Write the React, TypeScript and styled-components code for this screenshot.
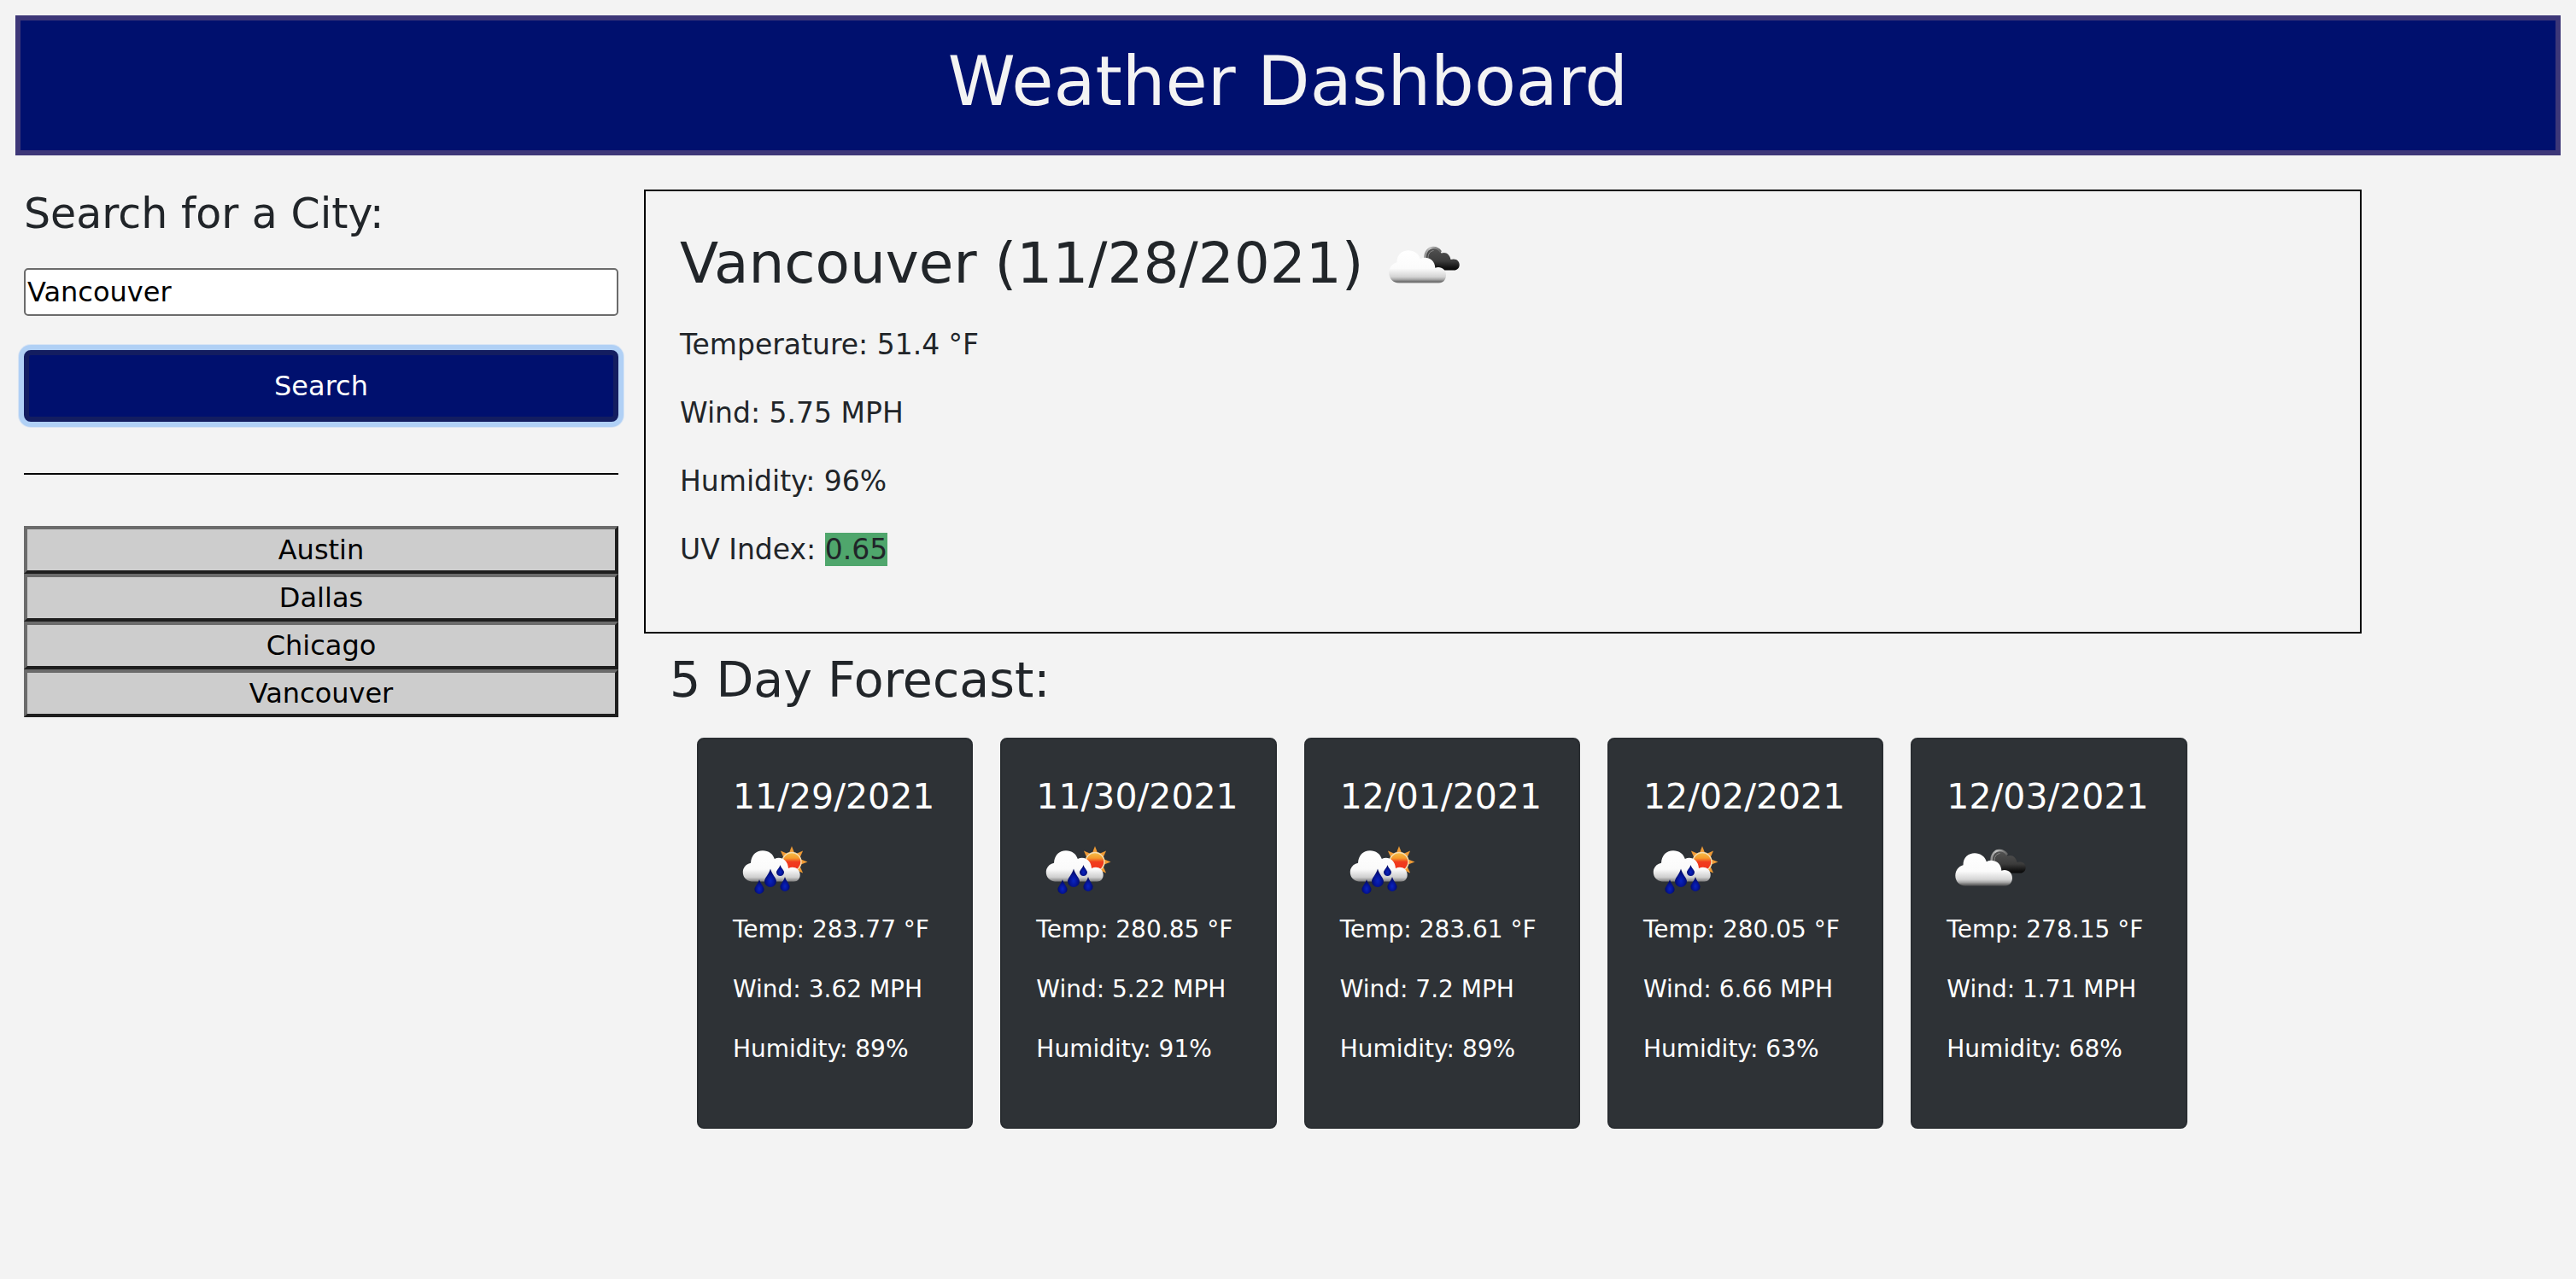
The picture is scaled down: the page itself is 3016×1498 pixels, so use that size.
import React, { useState } from "react";
import styled, { createGlobalStyle } from "styled-components";

const GlobalStyle = createGlobalStyle`
  *, *::before, *::after { box-sizing: border-box; }
  body {
    margin: 0;
    background: #f3f3f3;
    color: #212529;
    font-family: "DejaVu Sans", Verdana, sans-serif;
    font-size: 32px;
    line-height: 48px;
  }
  h1, h2, h3, p, ul { margin: 0; font-weight: 400; }
`;

const Header = styled.header`
  margin: 18px 18px 0;
  padding: 24px 20px 32px;
  border: 6px solid #3d3778;
  background: #00106e;
  color: #f3f3f3;
  text-align: center;
`;

const Title = styled.h1`
  font-size: 80px;
  line-height: 96px;
`;

const Columns = styled.div`
  display: flex;
  align-items: flex-start;
  margin-top: 40px;
`;

const Sidebar = styled.aside`
  flex: 0 0 25%;
  padding: 0 30px 0 28px;
`;

const SearchForm = styled.form`
  display: flex;
  flex-direction: column;
`;

const SearchLabel = styled.label`
  margin-bottom: 34px;
  font-size: 49px;
  line-height: 58px;
`;

const CityInput = styled.input`
  width: 100%;
  height: 56px;
  margin-bottom: 40px;
  padding: 2px;
  border: 2px solid #6b6b6b;
  border-radius: 5px;
  background: #fff;
  color: #000;
  font: inherit;
`;

const SearchButton = styled.button`
  height: 84px;
  border: 6px solid #131d60;
  border-radius: 8px;
  background: #00106e;
  box-shadow: 0 0 0 6px #b0d0f5, 0 0 0 7px #d9e5f4;
  color: #fff;
  font: inherit;
`;

const Divider = styled.hr`
  height: 2px;
  margin: 60px 0;
  border: 0;
  background: #000;
`;

const HistoryList = styled.ul`
  padding: 0;
  list-style: none;
`;

const HistoryButton = styled.button`
  display: block;
  width: 100%;
  height: 56px;
  padding: 0;
  border: 4px solid;
  border-color: #6b6b6b #1e1e1e #1e1e1e #6b6b6b;
  background: #cdcdcd;
  color: #000;
  font: inherit;
`;

const Main = styled.main`
  flex: 0 0 66.6667%;
`;

const Current = styled.section`
  padding: 46px 40px 40px;
  border: 2px solid #000;
`;

const CurrentHeading = styled.h2`
  display: flex;
  align-items: center;
  gap: 20px;
  margin-bottom: 32px;
  font-size: 66px;
  line-height: 78px;
`;

const Reading = styled.p`
  margin-bottom: 32px;
  font-size: 33px;
`;

const UvBadge = styled.span`
  background: #4fa66c;
`;

const ForecastHeading = styled.h2`
  margin: 20px 30px 34px;
  font-size: 57px;
  line-height: 68px;
`;

const CardGrid = styled.div`
  display: grid;
  grid-template-columns: repeat(5, 1fr);
  gap: 32px;
  padding: 0 204px 0 62px;
`;

const Card = styled.article`
  padding: 42px 38px 40px 40px;
  border: 2px solid #292d31;
  border-radius: 8px;
  background: #2e3236;
  color: #fff;
`;

const CardDate = styled.h3`
  font-size: 41px;
  line-height: 50px;
  white-space: nowrap;
`;

const CardIcon = styled.div`
  display: flex;
  margin: 22px 0 20px;
`;

const CardReading = styled.p`
  margin-bottom: 32px;
  font-size: 28px;
  line-height: 38px;
  white-space: nowrap;
`;

const IconSvg = styled.svg`
  flex: none;
  width: 100px;
  height: 70px;
`;

function BrokenClouds({ id }: { id: string }) {
  return (
    <IconSvg viewBox="0 10 100 70" role="img" aria-label="Broken clouds">
      <defs>
        <linearGradient id={`${id}-front`} gradientUnits="userSpaceOnUse" x1="0" y1="29" x2="0" y2="68">
          <stop offset="0" stopColor="#fff" />
          <stop offset="0.55" stopColor="#fbfbfb" />
          <stop offset="0.8" stopColor="#d4d4d4" />
          <stop offset="0.88" stopColor="#a8a8a8" />
          <stop offset="0.95" stopColor="#6a6a6a" />
          <stop offset="1" stopColor="#686868" stopOpacity="0.6" />
        </linearGradient>
        <linearGradient id={`${id}-back`} gradientUnits="userSpaceOnUse" x1="0" y1="25" x2="0" y2="53">
          <stop offset="0" stopColor="#555" />
          <stop offset="0.6" stopColor="#3c3c3c" />
          <stop offset="0.85" stopColor="#161616" />
          <stop offset="1" stopColor="#050505" />
        </linearGradient>
        <linearGradient id={`${id}-rim`} gradientUnits="userSpaceOnUse" x1="50" y1="30" x2="70" y2="30">
          <stop offset="0" stopColor="#777" />
          <stop offset="0.4" stopColor="#c4c4c4" />
          <stop offset="1" stopColor="#666" />
        </linearGradient>
      </defs>
      <path
        d="M54 46C50 36 53 26 62 26C67 26 70 29 71.500 32.500C77 30.500 81.500 34 82.500 40C88 38 93 41 92.700 46.500C92.500 50 90 52.500 86.500 52.500H66Z"
        fill={`url(#${id}-back)`}
      />
      <path d="M52.500 38C52.500 30 57 26 62 26C66 26 69 28 71 31" fill="none" stroke={`url(#${id}-rim)`} strokeWidth="2.400" />
      <path d="M56 38C56 32.500 59 30 62.500 29.500" fill="none" stroke="#888" strokeWidth="1" />
      <path
        d="M22 67.500C15 67.500 10.300 62 10.300 55.500C10.300 49.500 14 44.500 19.500 43.200C19.500 34 25.500 29.300 33 29.300C39.500 29.300 45 33 46.800 39.200C54 35.500 64 39.500 64.300 49.700C71 47.500 77 51.500 77 58.500C77 63.500 73.500 67.500 68.500 67.500Z"
        fill={`url(#${id}-front)`}
      />
    </IconSvg>
  );
}

function Drop({ x, top, bottom, r, fill }: { x: number; top: number; bottom: number; r: number; fill: string }) {
  const cy = bottom - r;
  const waist = top + (cy - top) * 0.45;
  return (
    <path
      d={`M${x} ${top}C${x + r * 0.25} ${waist} ${x + r} ${cy - r * 0.5} ${x + r} ${cy}A${r} ${r} 0 0 1 ${x - r} ${cy}C${x - r} ${cy - r * 0.5} ${x - r * 0.25} ${waist} ${x} ${top}Z`}
      fill={fill}
    />
  );
}

function SunRain({ id }: { id: string }) {
  const rays = Array.from({ length: 8 }, (_, i) => i * 45);
  const drop = `url(#${id}-drop)`;
  return (
    <IconSvg viewBox="0 10 100 70" role="img" aria-label="Rain with sun">
      <defs>
        <linearGradient id={`${id}-sun`} x1="0" y1="0" x2="0" y2="1">
          <stop offset="0" stopColor="#f7c04a" />
          <stop offset="0.3" stopColor="#f59a2c" />
          <stop offset="0.5" stopColor="#f03d1e" />
          <stop offset="1" stopColor="#f22f1a" />
        </linearGradient>
        <linearGradient id={`${id}-cloud`} gradientUnits="userSpaceOnUse" x1="0" y1="26" x2="0" y2="63">
          <stop offset="0" stopColor="#fff" />
          <stop offset="0.6" stopColor="#fafafa" />
          <stop offset="0.85" stopColor="#cfcfcf" />
          <stop offset="1" stopColor="#777" />
        </linearGradient>
        <radialGradient id={`${id}-drop`} cx="0.5" cy="0.65" r="0.55">
          <stop offset="0" stopColor="#0a24c0" />
          <stop offset="0.5" stopColor="#05159a" />
          <stop offset="1" stopColor="#020a5e" />
        </radialGradient>
      </defs>
      {rays.map((angle) => (
        <path key={angle} d="M69 21L72.500 30H65.500Z" fill="#ee9a35" transform={`rotate(${angle} 69 39.500)`} />
      ))}
      <circle cx="69" cy="39.500" r="11" fill={`url(#${id}-sun)`} stroke="#f6dcae" strokeWidth="1.400" />
      <path
        d="M22 62.500C15.500 61.500 11.800 57 11.800 51.500C11.800 46 15.500 42 21 40.800C21.500 31.500 27 26.200 35 26.200C42 26.200 47 30 48.800 36C56 32.500 64.500 37 65 47C72 43.500 78.700 48 78.700 54.500C78.700 59 76 62.500 71.500 62.500Z"
        fill={`url(#${id}-cloud)`}
      />
      <Drop x={44} top={47.5} bottom={69} r={7} fill={drop} />
      <Drop x={55.5} top={43} bottom={56} r={4.5} fill={drop} />
      <Drop x={61} top={57} bottom={74} r={5.6} fill={drop} />
      <Drop x={31} top={60} bottom={77} r={5.6} fill={drop} />
    </IconSvg>
  );
}

type Day = { date: string; sky: "rain" | "clouds"; temp: string; wind: string; humidity: string };

const cities = ["Austin", "Dallas", "Chicago", "Vancouver"];

const days: Day[] = [
  { date: "11/29/2021", sky: "rain", temp: "283.77", wind: "3.62", humidity: "89" },
  { date: "11/30/2021", sky: "rain", temp: "280.85", wind: "5.22", humidity: "91" },
  { date: "12/01/2021", sky: "rain", temp: "283.61", wind: "7.2", humidity: "89" },
  { date: "12/02/2021", sky: "rain", temp: "280.05", wind: "6.66", humidity: "63" },
  { date: "12/03/2021", sky: "clouds", temp: "278.15", wind: "1.71", humidity: "68" },
];

export default function App() {
  const [city, setCity] = useState("Vancouver");

  return (
    <>
      <GlobalStyle />
      <Header>
        <Title>Weather Dashboard</Title>
      </Header>
      <Columns>
        <Sidebar>
          <SearchForm onSubmit={(event) => event.preventDefault()}>
            <SearchLabel htmlFor="city">Search for a City:</SearchLabel>
            <CityInput id="city" type="text" value={city} onChange={(event) => setCity(event.target.value)} />
            <SearchButton type="submit">Search</SearchButton>
          </SearchForm>
          <Divider />
          <HistoryList>
            {cities.map((name) => (
              <li key={name}>
                <HistoryButton type="button" onClick={() => setCity(name)}>
                  {name}
                </HistoryButton>
              </li>
            ))}
          </HistoryList>
        </Sidebar>
        <Main>
          <Current>
            <CurrentHeading>
              Vancouver (11/28/2021)
              <BrokenClouds id="today" />
            </CurrentHeading>
            <Reading>Temperature: 51.4 °F</Reading>
            <Reading>Wind: 5.75 MPH</Reading>
            <Reading>Humidity: 96%</Reading>
            <Reading>
              UV Index: <UvBadge>0.65</UvBadge>
            </Reading>
          </Current>
          <ForecastHeading>5 Day Forecast:</ForecastHeading>
          <CardGrid>
            {days.map((day, index) => (
              <Card key={day.date}>
                <CardDate>{day.date}</CardDate>
                <CardIcon>
                  {day.sky === "rain" ? <SunRain id={`day${index}`} /> : <BrokenClouds id={`day${index}`} />}
                </CardIcon>
                <CardReading>Temp: {day.temp} °F</CardReading>
                <CardReading>Wind: {day.wind} MPH</CardReading>
                <CardReading>Humidity: {day.humidity}%</CardReading>
              </Card>
            ))}
          </CardGrid>
        </Main>
      </Columns>
    </>
  );
}
